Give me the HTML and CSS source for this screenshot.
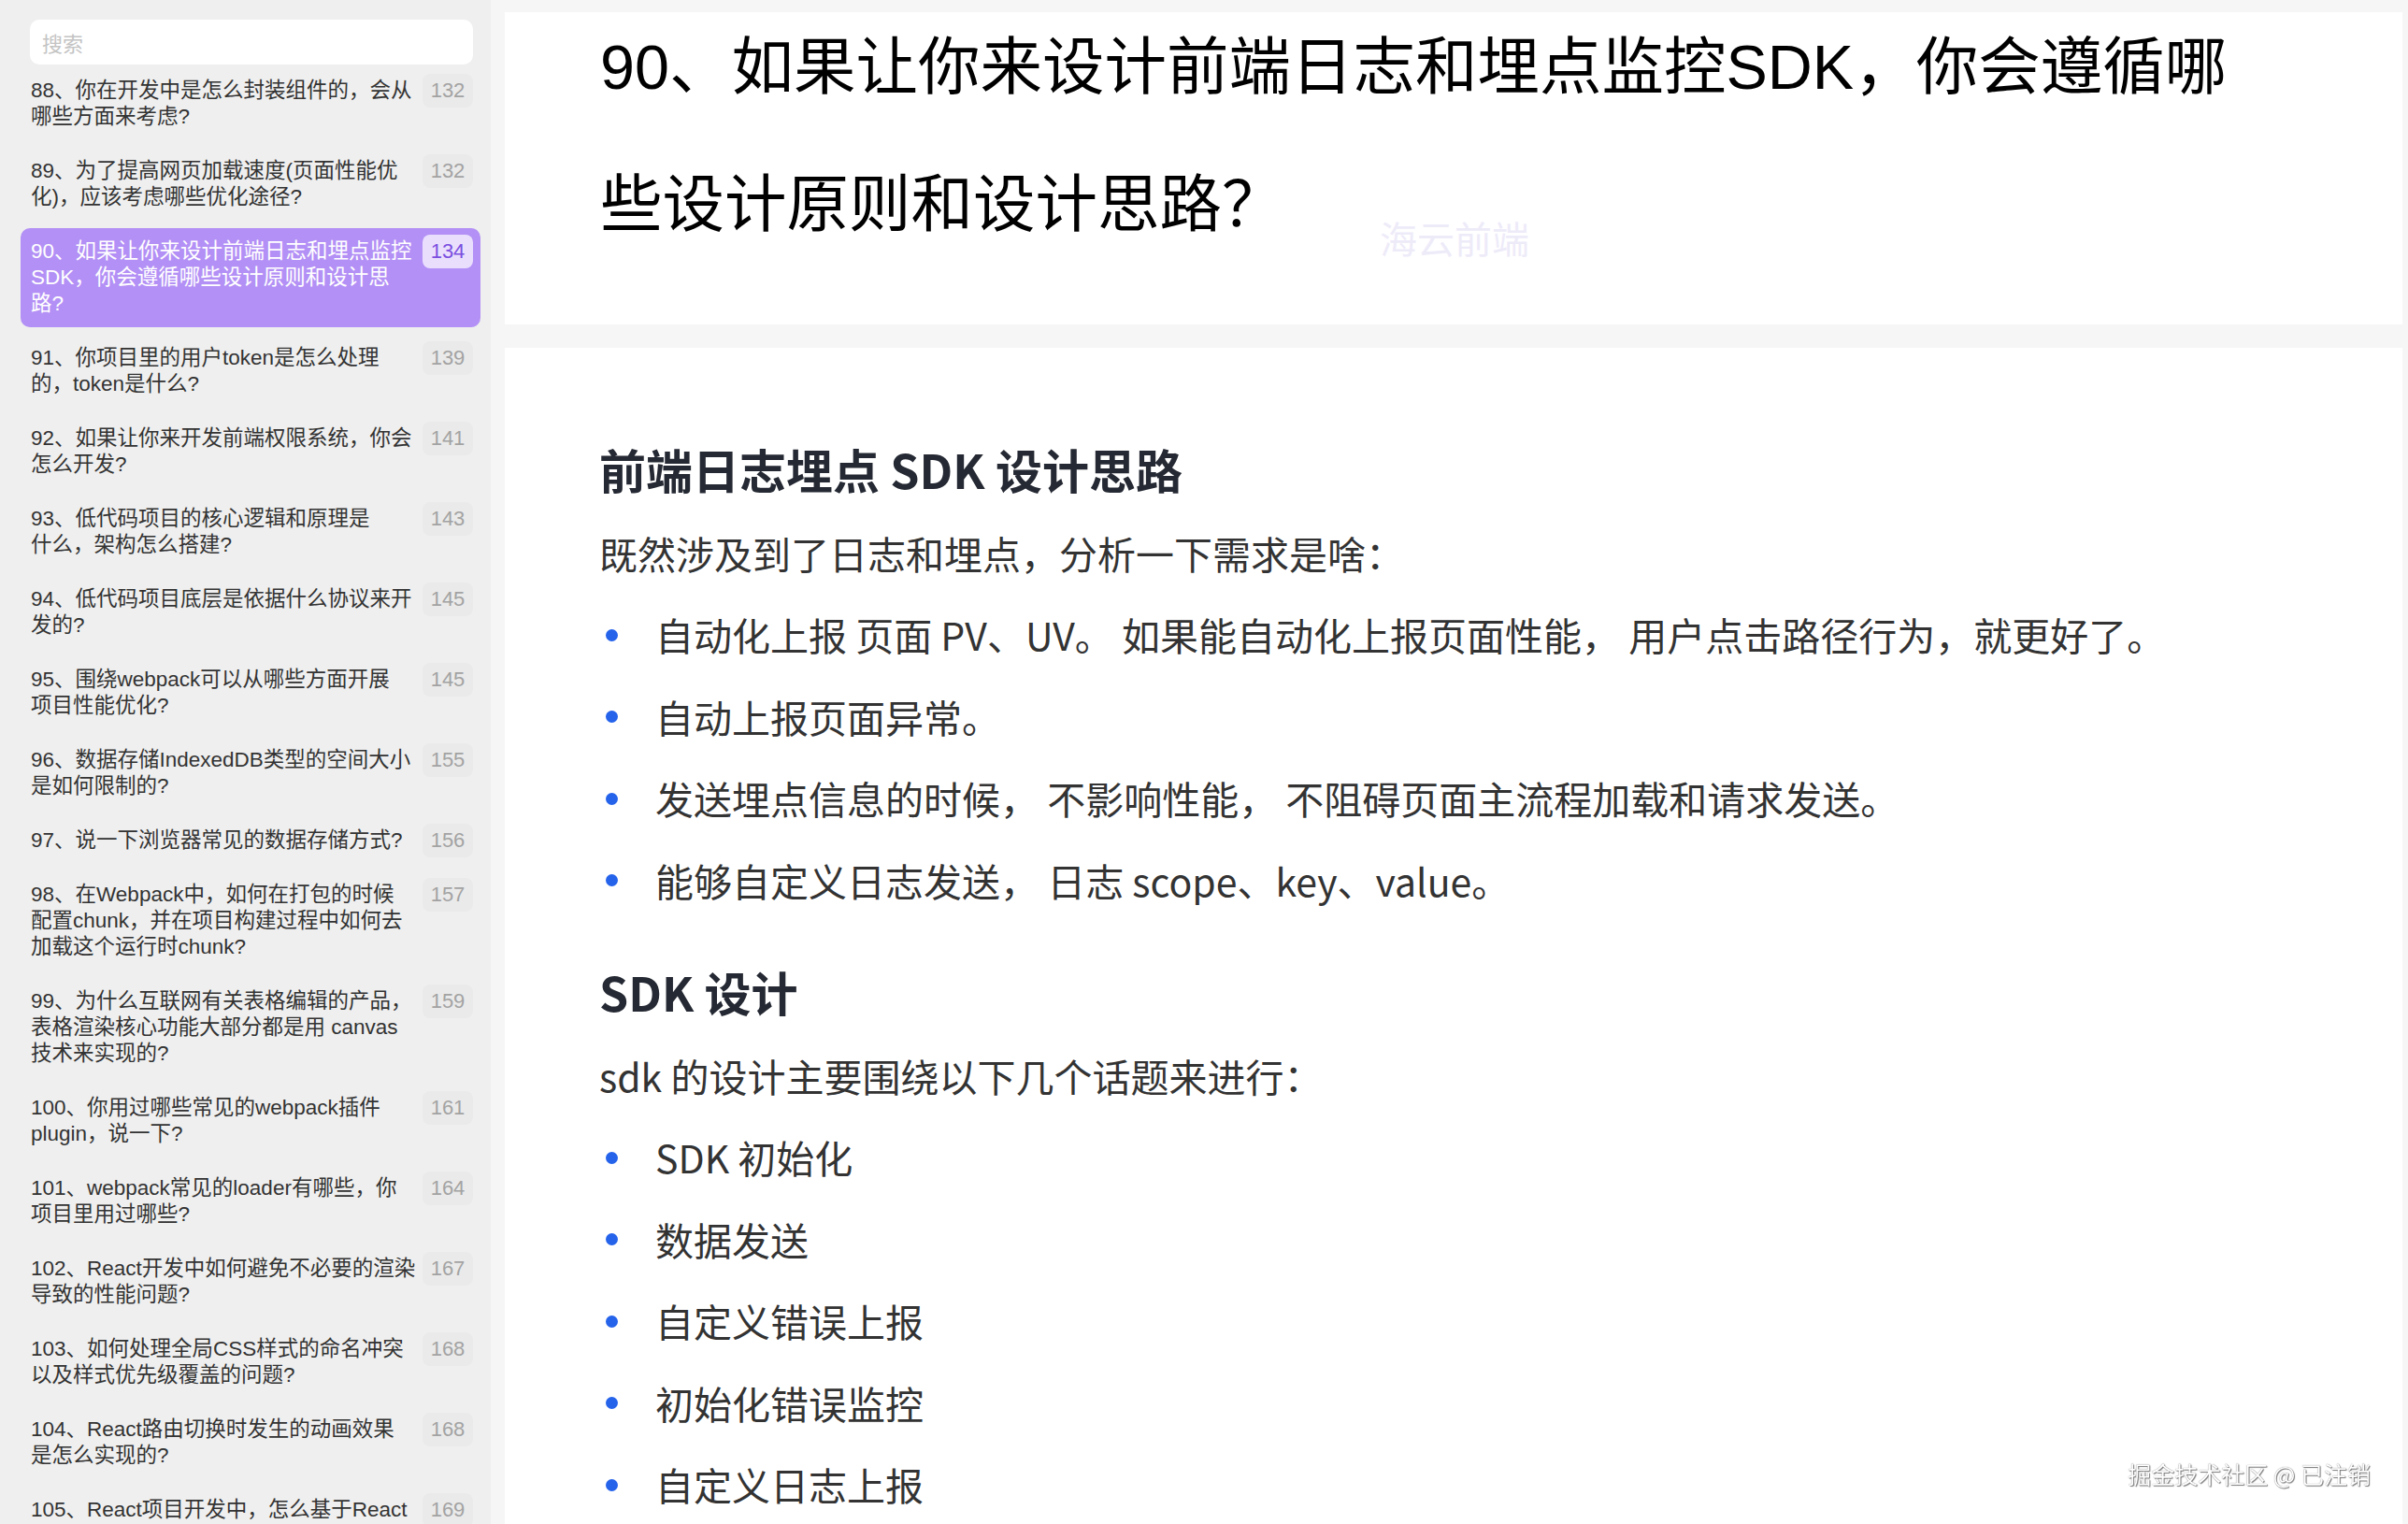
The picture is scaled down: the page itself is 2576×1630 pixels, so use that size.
FILE: index.html
```html
<html>
<head>
<meta charset="utf-8">
<link rel="stylesheet" href="styles.css">
</head>
<body>
<div class="app">
    <aside class="sidebar">
        <input class="search" type="text" placeholder="搜索">
        <ul class="toc">
            <li class="toc-item"><span class="toc-title">88、你在开发中是怎么封装组件的，会从<br>哪些方面来考虑?</span><span class="toc-page">132</span></li>
            <li class="toc-item"><span class="toc-title">89、为了提高网页加载速度(页面性能优<br>化)，应该考虑哪些优化途径?</span><span class="toc-page">132</span></li>
            <li class="toc-item active"><span class="toc-title">90、如果让你来设计前端日志和埋点监控<br>SDK，你会遵循哪些设计原则和设计思<br>路?</span><span class="toc-page">134</span></li>
            <li class="toc-item"><span class="toc-title">91、你项目里的用户token是怎么处理<br>的，token是什么?</span><span class="toc-page">139</span></li>
            <li class="toc-item"><span class="toc-title">92、如果让你来开发前端权限系统，你会<br>怎么开发?</span><span class="toc-page">141</span></li>
            <li class="toc-item"><span class="toc-title">93、低代码项目的核心逻辑和原理是<br>什么，架构怎么搭建?</span><span class="toc-page">143</span></li>
            <li class="toc-item"><span class="toc-title">94、低代码项目底层是依据什么协议来开<br>发的?</span><span class="toc-page">145</span></li>
            <li class="toc-item"><span class="toc-title">95、围绕webpack可以从哪些方面开展<br>项目性能优化?</span><span class="toc-page">145</span></li>
            <li class="toc-item"><span class="toc-title">96、数据存储IndexedDB类型的空间大小<br>是如何限制的?</span><span class="toc-page">155</span></li>
            <li class="toc-item"><span class="toc-title">97、说一下浏览器常见的数据存储方式?</span><span class="toc-page">156</span></li>
            <li class="toc-item"><span class="toc-title">98、在Webpack中，如何在打包的时候<br>配置chunk，并在项目构建过程中如何去<br>加载这个运行时chunk?</span><span class="toc-page">157</span></li>
            <li class="toc-item"><span class="toc-title">99、为什么互联网有关表格编辑的产品，<br>表格渲染核心功能大部分都是用 canvas<br>技术来实现的?</span><span class="toc-page">159</span></li>
            <li class="toc-item"><span class="toc-title">100、你用过哪些常见的webpack插件<br>plugin，说一下?</span><span class="toc-page">161</span></li>
            <li class="toc-item"><span class="toc-title">101、webpack常见的loader有哪些，你<br>项目里用过哪些?</span><span class="toc-page">164</span></li>
            <li class="toc-item"><span class="toc-title">102、React开发中如何避免不必要的渲染<br>导致的性能问题?</span><span class="toc-page">167</span></li>
            <li class="toc-item"><span class="toc-title">103、如何处理全局CSS样式的命名冲突<br>以及样式优先级覆盖的问题?</span><span class="toc-page">168</span></li>
            <li class="toc-item"><span class="toc-title">104、React路由切换时发生的动画效果<br>是怎么实现的?</span><span class="toc-page">168</span></li>
            <li class="toc-item"><span class="toc-title">105、React项目开发中，怎么基于React<br>Router实现权限路由?</span><span class="toc-page">169</span></li>
        </ul>
    </aside>

    <main class="main">
        <section class="card title-card">
            <h1 class="doc-title">90、如果让你来设计前端日志和埋点监控SDK，你会遵循哪<br>些设计原则和设计思路？</h1>
            <span class="mark">海云前端</span>
        </section>

        <section class="card article">
            <h2>前端日志埋点 SDK 设计思路</h2>
            <p>既然涉及到了日志和埋点，分析一下需求是啥：</p>
            <ul class="dots">
                <li>自动化上报 页面 PV、UV。 如果能自动化上报页面性能， 用户点击路径行为，就更好了。</li>
                <li>自动上报页面异常。</li>
                <li>发送埋点信息的时候， 不影响性能， 不阻碍页面主流程加载和请求发送。</li>
                <li>能够自定义日志发送， 日志 scope、key、value。</li>
            </ul>

            <h2 class="next">SDK 设计</h2>
            <p>sdk 的设计主要围绕以下几个话题来进行：</p>
            <ul class="dots">
                <li>SDK 初始化</li>
                <li>数据发送</li>
                <li>自定义错误上报</li>
                <li>初始化错误监控</li>
                <li>自定义日志上报</li>
            </ul>
        </section>
    </main>

    <div class="credit">掘金技术社区 @ 已注销</div>
</div>
</body>
</html>
```

FILE: styles.css
```css
* {
    box-sizing: border-box;
}
html, body {
    margin: 0;
    height: 100%;
}
body {
    font-family: "Noto Sans CJK SC", sans-serif;
    background: #f6f6f6;
    overflow: hidden;
}
.app {
    display: grid;
    grid-template-columns: 525px 1fr;
    height: 1630px;
}

/* sidebar */
.sidebar {
    background: #efefef;
    padding: 21px 11px 0 22px;
    overflow: hidden;
}
.search {
    display: block;
    width: 474px;
    height: 48px;
    margin: 0 0 3px 10px;
    padding: 0 13px;
    border: 0;
    border-radius: 10px;
    background: #fff;
    font: 22px "Noto Sans CJK SC", sans-serif;
    outline: none;
}
.search::placeholder {
    color: #c4c4c4;
}
.toc {
    list-style: none;
    margin: 0;
    padding: 0;
    display: flex;
    flex-direction: column;
    gap: 8px;
}
.toc-item {
    display: flex;
    justify-content: space-between;
    align-items: flex-start;
    padding: 11px 8px 11px 11px;
    border-radius: 10px;
    font-family: "Liberation Sans", "Noto Sans CJK SC", sans-serif;
    font-size: 22.5px;
    line-height: 28px;
    color: #333;
}
.toc-title {
    white-space: nowrap;
}
.toc-page {
    flex: none;
    width: 54px;
    height: 36px;
    margin: -4px 0;
    border-radius: 8px;
    background: #eaeaea;
    color: #a3a3a3;
    text-align: center;
    line-height: 36px;
    font-size: 22px;
}
.toc-item.active {
    background: #b390f5;
    color: #fff;
}
.toc-item.active .toc-page {
    background: #e9dffd;
    color: #7b4fe0;
}

/* main */
.main {
    display: flex;
    flex-direction: column;
    gap: 25px;
    padding: 13px 6px 0 15px;
    overflow: hidden;
}
.card {
    background: #fff;
}
.title-card {
    position: relative;
    padding: 0 101px 54px 102px;
}
.doc-title {
    margin: -14px 0 0;
    font-family: "Liberation Sans", "Noto Sans CJK SC", sans-serif;
    font-size: 66.5px;
    font-weight: 400;
    line-height: 147px;
    color: #000;
    white-space: nowrap;
}
.mark {
    position: absolute;
    left: 936px;
    top: 221px;
    font-size: 40px;
    line-height: 40px;
    color: #eeebf9;
}

.article {
    flex: 1;
    padding: 85px 101px 0;
    color: #333;
}
.article h2 {
    margin: 0;
    font-size: 50px;
    font-weight: 600;
    line-height: 88px;
    color: #252933;
}
.article h2.next {
    margin-top: 31px;
}
.article p {
    margin: 2px 0 0;
    font-size: 41px;
    line-height: 88px;
}
.dots {
    list-style: none;
    margin: 0;
    padding: 0;
}
.dots li {
    position: relative;
    padding-left: 60px;
    font-size: 41px;
    line-height: 87.5px;
}
.dots li::before {
    content: "";
    position: absolute;
    left: 7px;
    top: 50%;
    width: 13px;
    height: 13px;
    margin-top: -6px;
    border-radius: 50%;
    background: #2563eb;
}

.credit {
    position: fixed;
    right: 40px;
    bottom: 41px;
    font-size: 25px;
    line-height: 25px;
    color: #fff;
    text-shadow: 1px 1px 1px rgba(0, 0, 0, 0.5), 0 0 1px rgba(0, 0, 0, 0.6);
}
```
